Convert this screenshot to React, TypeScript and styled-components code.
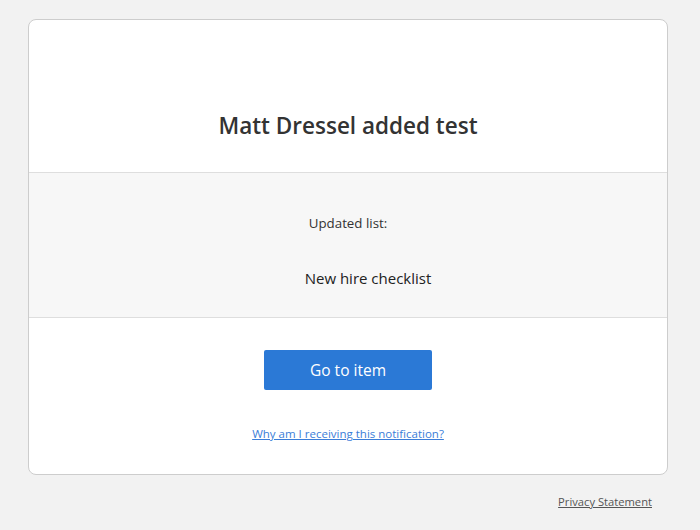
import styled, { createGlobalStyle } from 'styled-components';

const GlobalStyle = createGlobalStyle`
  html,
  body {
    margin: 0;
    background: #f2f2f2;
    font-family: 'Segoe UI', 'Open Sans', sans-serif;
    color: #333;
  }
`;

export default function App() {
  return (
    <>
      <GlobalStyle />
      <Page>
        <Card>
          <Header>
            <Title>Matt Dressel added test</Title>
          </Header>
          <Details>
            <Label>Updated list:</Label>
            <ListName>New hire checklist</ListName>
          </Details>
          <Actions>
            <PrimaryButton type="button">Go to item</PrimaryButton>
            <HelpLink href="#">Why am I receiving this notification?</HelpLink>
          </Actions>
        </Card>
        <Footer>
          <FooterLink href="#">Privacy Statement</FooterLink>
        </Footer>
      </Page>
    </>
  );
}

const Page = styled.div`
  padding-top: 19px;
  width: 700px;
`;

const Card = styled.div`
  box-sizing: border-box;
  width: 640px;
  margin-left: 28px;
  background: #fff;
  border: 1px solid #cdcdcd;
  border-radius: 8px;
  overflow: hidden;
`;

const Header = styled.div`
  display: flex;
  justify-content: center;
  padding: 90px 0 30px;
`;

const Title = styled.h1`
  margin: 0;
  font-size: 22.5px;
  line-height: 32px;
  font-weight: 600;
  color: #333;
`;

const Details = styled.div`
  display: flex;
  flex-direction: column;
  align-items: center;
  gap: 34px;
  padding: 40px 0 28px;
  background: #f7f7f7;
  border-top: 1px solid #dedede;
  border-bottom: 1px solid #dedede;
`;

const Label = styled.div`
  font-size: 13.3px;
  line-height: 20px;
  color: #333;
`;

const ListName = styled.div`
  padding-left: 40px;
  font-size: 15px;
  line-height: 22px;
  color: #222;
`;

const Actions = styled.div`
  display: flex;
  flex-direction: column;
  align-items: center;
  gap: 36px;
  padding: 32px 0 32px;
`;

const PrimaryButton = styled.button`
  width: 168px;
  height: 40px;
  border: none;
  border-radius: 2px;
  background: #2b79d6;
  color: #fff;
  font-family: inherit;
  font-size: 15.5px;
  cursor: pointer;
`;

const HelpLink = styled.a`
  font-size: 11.5px;
  line-height: 16px;
  color: #3b7dd8;
  text-decoration: underline;
`;

const Footer = styled.div`
  display: flex;
  justify-content: flex-end;
  width: 640px;
  margin-left: 28px;
  padding: 19px 16px 0 0;
  box-sizing: border-box;
`;

const FooterLink = styled.a`
  font-size: 11.2px;
  line-height: 16px;
  color: #555;
  text-decoration: underline;
`;
